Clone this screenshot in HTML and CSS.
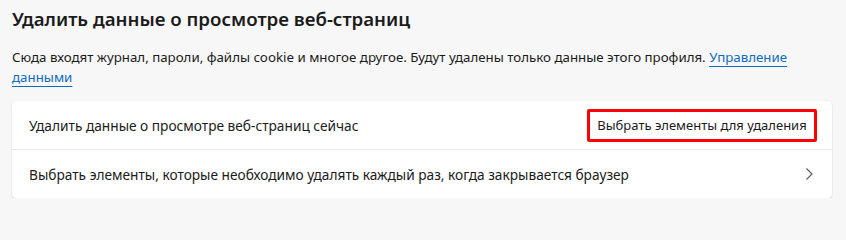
FILE: index.html
```html
<!DOCTYPE html>
<html lang="ru">
<head>
<meta charset="utf-8">
<title>Удалить данные о просмотре веб-страниц</title>
<link rel="stylesheet" href="styles.css">
</head>
<body>
<main class="page">
  <h1 class="title">Удалить данные о просмотре веб-страниц</h1>
  <p class="desc">Сюда входят журнал, пароли, файлы cookie и многое другое. Будут удалены только данные этого профиля. <a class="link" href="#">Управление данными</a></p>
  <section class="card">
    <div class="row">
      <span class="label">Удалить данные о просмотре веб-страниц сейчас</span>
      <button class="btn" type="button">Выбрать элементы для удаления</button>
    </div>
    <div class="row row-link">
      <span class="label">Выбрать элементы, которые необходимо удалять каждый раз, когда закрывается браузер</span>
      <svg class="chev" width="16" height="16" viewBox="0 0 16 16" aria-hidden="true"><polyline points="5.5,2.5 11,8 5.5,13.5" fill="none" stroke="#5c5c5c" stroke-width="1.2"/></svg>
    </div>
  </section>
</main>
</body>
</html>
```
FILE: styles.css
```css
html, body {
  margin: 0;
  padding: 0;
  background: #f7f7f7;
}
body {
  font-family: "Noto Sans", "Open Sans", sans-serif;
  color: #1b1b1b;
}
.page {
  padding: 0 14px 0 12px;
}
.title {
  margin: 5px 0 0;
  font-size: 18.7px;
  line-height: 28px;
  font-weight: 600;
}
.desc {
  margin: 14px 0 0;
  font-size: 13.3px;
  line-height: 20px;
}
.link {
  color: #0f6cbd;
  text-decoration: underline;
  text-underline-offset: 4px;
}
.card {
  margin-top: 14px;
  background: #fff;
  border-radius: 4px;
  box-shadow: 0 1px 2px rgba(0,0,0,0.14), 0 0 1px rgba(0,0,0,0.08);
}
.row {
  display: flex;
  align-items: center;
  justify-content: space-between;
  height: 48px;
  padding: 0 15px 0 17px;
  font-size: 13.7px;
}
.row + .row {
  border-top: 1px solid #ebebeb;
}
.btn {
  box-sizing: border-box;
  width: 230px;
  height: 33px;
  border: 3px solid #f00;
  border-radius: 2px;
  background: #fff;
  color: #1b1b1b;
  font-family: inherit;
  font-size: 13px;
  white-space: nowrap;
  padding: 0;
}
.chev {
  display: block;
}
```
